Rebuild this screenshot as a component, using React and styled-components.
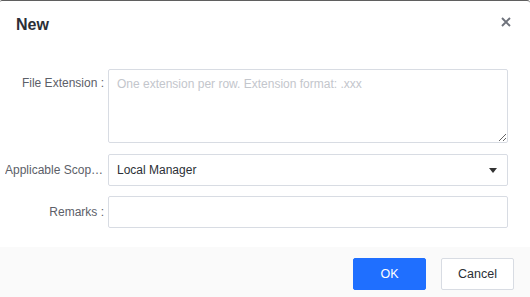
import React, { useState } from 'react';
import styled, { createGlobalStyle } from 'styled-components';

const GlobalStyle = createGlobalStyle`
  html, body {
    margin: 0;
    padding: 0;
    background: #ffffff;
  }
  body {
    font-family: "Liberation Sans", Arial, sans-serif;
  }
  * { box-sizing: border-box; }
`;

const Dialog = styled.div`
  width: 530px;
  height: 297px;
  display: flex;
  flex-direction: column;
  background: #fff;
  border-top: 1px solid #5f5f5f;
  border-top-left-radius: 2px;
  border-top-right-radius: 3px;
  overflow: hidden;
`;

const Header = styled.div`
  display: flex;
  align-items: flex-start;
  justify-content: space-between;
  height: 47px;
  padding: 15px 19px 0 16px;
`;

const Title = styled.h2`
  margin: 0;
  font-size: 16px;
  line-height: 18px;
  font-weight: bold;
  color: #2b2f36;
`;

const Close = styled.button`
  border: none;
  background: none;
  padding: 0;
  margin-top: 1px;
  width: 10px;
  height: 10px;
  display: flex;
  cursor: pointer;
`;

const Body = styled.div`
  flex: 1;
  display: flex;
  flex-direction: column;
  gap: 10px;
  padding: 21px 22px 0 5px;
`;

const Row = styled.div`
  display: flex;
  align-items: flex-start;
  margin-bottom: ${p => p.$extra || 0}px;
`;

const Label = styled.label`
  width: 99px;
  flex: none;
  margin-right: 4px;
  line-height: ${p => p.$lh || 32}px;
  font-size: 12px;
  color: #5c6068;
  text-align: right;
  white-space: nowrap;
  overflow: hidden;
  text-overflow: ellipsis;
`;

const fieldBase = `
  flex: 1;
  border: 1px solid #d8dce3;
  border-radius: 2px;
  font-family: "Liberation Sans", Arial, sans-serif;
  font-size: 12px;
  color: #2b2f36;
  background: #fff;
  outline: none;
`;

const TextArea = styled.textarea`
  ${fieldBase}
  height: 74px;
  padding: 6px 8px;
  line-height: 16px;
  resize: vertical;
  &::placeholder { color: #c3c6cc; }
`;

const Input = styled.input`
  ${fieldBase}
  height: 32px;
  padding: 0 8px;
`;

const SelectBox = styled.div`
  ${fieldBase}
  height: 32px;
  padding: 0 10px 0 8px;
  display: flex;
  align-items: center;
  justify-content: space-between;
  cursor: pointer;
`;

const Footer = styled.div`
  height: 50px;
  background: #fafafa;
  display: flex;
  justify-content: flex-end;
  align-items: flex-start;
  gap: 15px;
  padding: 11px 16px 0 0;
`;

const Button = styled.button`
  width: 73px;
  height: 32px;
  border-radius: 2px;
  font-family: "Liberation Sans", Arial, sans-serif;
  font-size: 12.5px;
  cursor: pointer;
  border: 1px solid ${p => (p.$primary ? '#1f6fff' : '#d8dce3')};
  background: ${p => (p.$primary ? '#1f6fff' : '#fff')};
  color: ${p => (p.$primary ? '#fff' : '#2b2f36')};
`;

export default function App() {
  const [scope] = useState('Local Manager');
  return (
    <>
      <GlobalStyle />
      <Dialog>
        <Header>
          <Title>New</Title>
          <Close aria-label="close">
            <svg width="10" height="10" viewBox="0 0 10 10">
              <path d="M1 1 L9 9 M9 1 L1 9" stroke="#6e727b" strokeWidth="1.9" />
            </svg>
          </Close>
        </Header>
        <Body>
          <Row $extra={1}>
            <Label $lh={28}>File Extension :</Label>
            <TextArea placeholder="One extension per row. Extension format: .xxx" />
          </Row>
          <Row>
            <Label>Applicable Scope :</Label>
            <SelectBox>
              <span>{scope}</span>
              <svg width="8" height="5" viewBox="0 0 8 5">
                <path d="M0 0 H8 L4 5 Z" fill="#333" />
              </svg>
            </SelectBox>
          </Row>
          <Row>
            <Label>Remarks :</Label>
            <Input />
          </Row>
        </Body>
        <Footer>
          <Button $primary>OK</Button>
          <Button>Cancel</Button>
        </Footer>
      </Dialog>
    </>
  );
}
